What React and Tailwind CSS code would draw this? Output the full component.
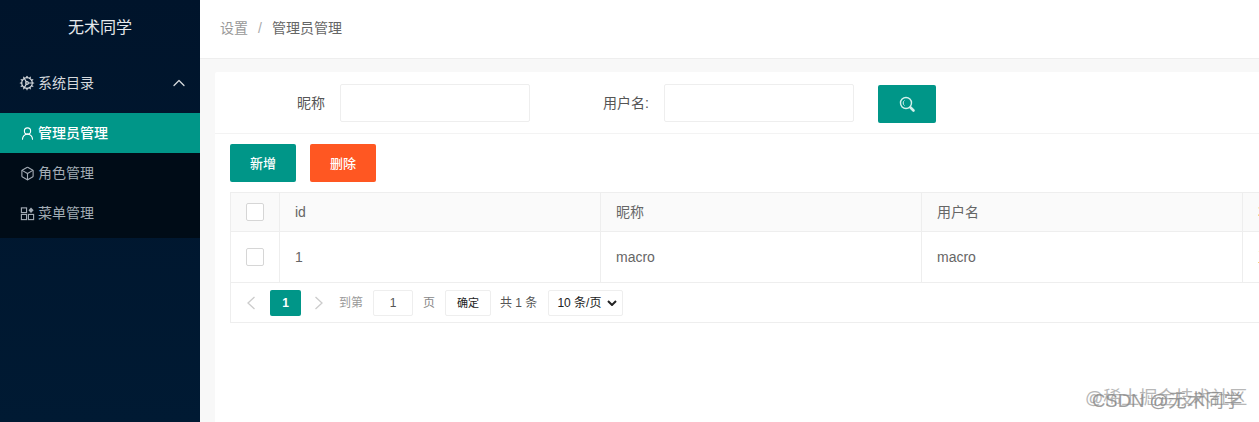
import React from 'react';
import { ChevronUp, UserRound, Box, Cog } from 'lucide-react';

function MenuIcon({ className }) {
  return (
    <svg width="15" height="15" viewBox="0 0 16 16" fill="none" stroke="currentColor" strokeWidth="1.2" className={className}>
      <rect x="1.5" y="2" width="5.5" height="5" />
      <rect x="1.5" y="9" width="5.5" height="5.5" />
      <rect x="9" y="9" width="5.5" height="5.5" />
      <path d="M11.75 1.5l2.75 3-2.75 3-2.75-3z" fill="currentColor" stroke="none" />
    </svg>
  );
}

function SearchIcon() {
  return (
    <svg width="18" height="18" viewBox="0 0 18 18" fill="none" stroke="currentColor">
      <circle cx="8" cy="8" r="5.5" strokeWidth="1.4" />
      <path d="M12.5 12.5l3 3" strokeWidth="2.6" strokeLinecap="round" />
      <path d="M6.5 5.5a3 3 0 0 0 0 5" strokeWidth="1" />
    </svg>
  );
}

function MenuItem({ icon: Icon, label, active }) {
  return (
    <div className={active
      ? 'h-10 flex items-center pl-[20px] bg-[#009688] text-white text-sm font-medium'
      : 'h-10 flex items-center pl-[20px] text-[#a3acb5] text-sm'}>
      <Icon size={15} strokeWidth={1.75} className="mr-[3px]" />
      <span>{label}</span>
    </div>
  );
}

function Checkbox() {
  return <div className="w-[18px] h-[18px] bg-white border border-[#d6d6d6] rounded-[2px]" />;
}

function Row({ head, cols, last }) {
  return (
    <div className={head
      ? 'flex h-[39px] bg-[#fafafa] border-b border-[#eeeeee] text-sm text-[#666666]'
      : 'flex h-[51px] border-b border-[#eeeeee] text-sm text-[#666666]'}>
      <div className="w-[49px] shrink-0 flex items-center justify-center border-r border-[#eeeeee]">
        <Checkbox />
      </div>
      {cols.map((c, i) => (
        <div key={i} className="w-[321px] shrink-0 flex items-center pl-[15px] border-r border-[#eeeeee]">{c}</div>
      ))}
      <div className="w-[100px] shrink-0 flex items-center pl-[15px] text-[#c77a3a]">{last}</div>
    </div>
  );
}

export default function App() {
  return (
    <div className="relative flex h-[422px] w-[1259px] overflow-hidden bg-[#f8f8f8] font-['Liberation_Sans','Noto_Sans_CJK_SC',sans-serif]">
      <aside className="w-[200px] shrink-0 bg-gradient-to-b from-[#00142b] to-[#001a33]">
        <div className="h-[55px] flex items-center justify-center text-base text-[#e6e9ec]">无术同学</div>
        <div className="h-[58px] pb-[2px] flex items-center pl-[19px] pr-[11px] text-sm text-[#d5d9dd]">
          <Cog size={16} strokeWidth={1.75} className="mr-[3px]" />
          <span className="flex-1">系统目录</span>
          <ChevronUp size={20} strokeWidth={1.5} />
        </div>
        <div className="h-[125px] bg-[#000c17]">
          <MenuItem icon={UserRound} label="管理员管理" active />
          <MenuItem icon={Box} label="角色管理" />
          <MenuItem icon={MenuIcon} label="菜单管理" />
        </div>
      </aside>

      <main className="flex-1 min-w-0 flex flex-col">
        <header className="h-[59px] shrink-0 pb-[2px] bg-white border-b border-[#eeeeee] flex items-center pl-5 text-sm">
          <span className="text-[#999999]">设置</span>
          <span className="text-[#aaaaaa] mx-[10px]">/</span>
          <span className="text-[#666666]">管理员管理</span>
        </header>

        <section className="flex-1 min-h-0 ml-[15px] mt-[13px] bg-white rounded-tl-[2px] overflow-hidden">
          <div className="h-[62px] flex items-center border-b border-[#f3f3f3]">
            <label className="w-[125px] pr-[15px] text-right text-sm text-[#555555]">昵称</label>
            <div className="w-[190px] h-[38px] border border-[#eeeeee] rounded-[2px]" />
            <label className="w-[134px] pr-[15px] text-right text-sm text-[#555555]">用户名:</label>
            <div className="w-[190px] h-[38px] border border-[#eeeeee] rounded-[2px]" />
            <button className="ml-6 mt-[2px] w-[58px] h-[38px] bg-[#009688] rounded-[2px] flex items-center justify-center text-[#d5f0ec]">
              <SearchIcon />
            </button>
          </div>

          <div className="pl-[15px]">
            <div className="flex gap-[14px] mt-[10px]">
              <button className="w-[66px] h-[38px] pt-[2px] bg-[#009688] rounded-[2px] text-white text-[13px] font-medium">新增</button>
              <button className="w-[66px] h-[38px] pt-[2px] bg-[#ff5722] rounded-[2px] text-white text-[13px] font-medium">删除</button>
            </div>

            <div className="mt-[10px] w-[1200px] border border-[#eeeeee]">
              <Row head cols={['id', '昵称', '用户名']} last="状态" />
              <Row cols={['1', 'macro', 'macro']} last="正常" />
              <div className="h-[39px] flex items-center pl-[15px] text-xs text-[#666666]">
                <svg width="10" height="14" viewBox="0 0 10 14" fill="none" stroke="#cccccc" strokeWidth="1.3">
                  <path d="M8.5 1L2 7l6.5 6" />
                </svg>
                <span className="ml-[14px] w-[31px] h-[26px] bg-[#009688] rounded-[2px] text-white flex items-center justify-center font-bold">1</span>
                <svg width="10" height="14" viewBox="0 0 10 14" fill="none" stroke="#cccccc" strokeWidth="1.3" className="ml-[13px]">
                  <path d="M1.5 1L8 7l-6.5 6" />
                </svg>
                <span className="ml-[15px] text-[#999999]">到第</span>
                <span className="ml-[10px] w-10 h-[26px] border border-[#eeeeee] rounded-[2px] flex items-center justify-center text-[#555555]">1</span>
                <span className="ml-[10px] text-[#888888]">页</span>
                <button className="ml-[10px] w-[46px] h-[26px] pt-[2px] border border-[#eeeeee] rounded-[2px] text-[11px] text-[#222222]">确定</button>
                <span className="ml-[9px] text-[#555555]">共 1 条</span>
                <div className="ml-[11px] w-[75px] h-[26px] border border-[#eeeeee] rounded-[2px] flex items-center pl-2 text-[#222222]">
                  <span className="flex-1">10 条/页</span>
                  <svg width="10" height="6" viewBox="0 0 10 6" className="mr-[5px]">
                    <path d="M1 1l4 4 4-4" fill="none" stroke="#222" strokeWidth="2" />
                  </svg>
                </div>
              </div>
            </div>
          </div>
        </section>
      </main>

      {/* watermark */}
      <div className="absolute left-[1085px] top-[386px] text-lg leading-6 text-[#999999] opacity-70 whitespace-nowrap">@稀土掘金技术社区</div>
      <div className="absolute left-[1092px] top-[389px] text-[18.5px] leading-6 text-[#888888] opacity-80 whitespace-nowrap">CSDN @无术同学</div>
    </div>
  );
}
